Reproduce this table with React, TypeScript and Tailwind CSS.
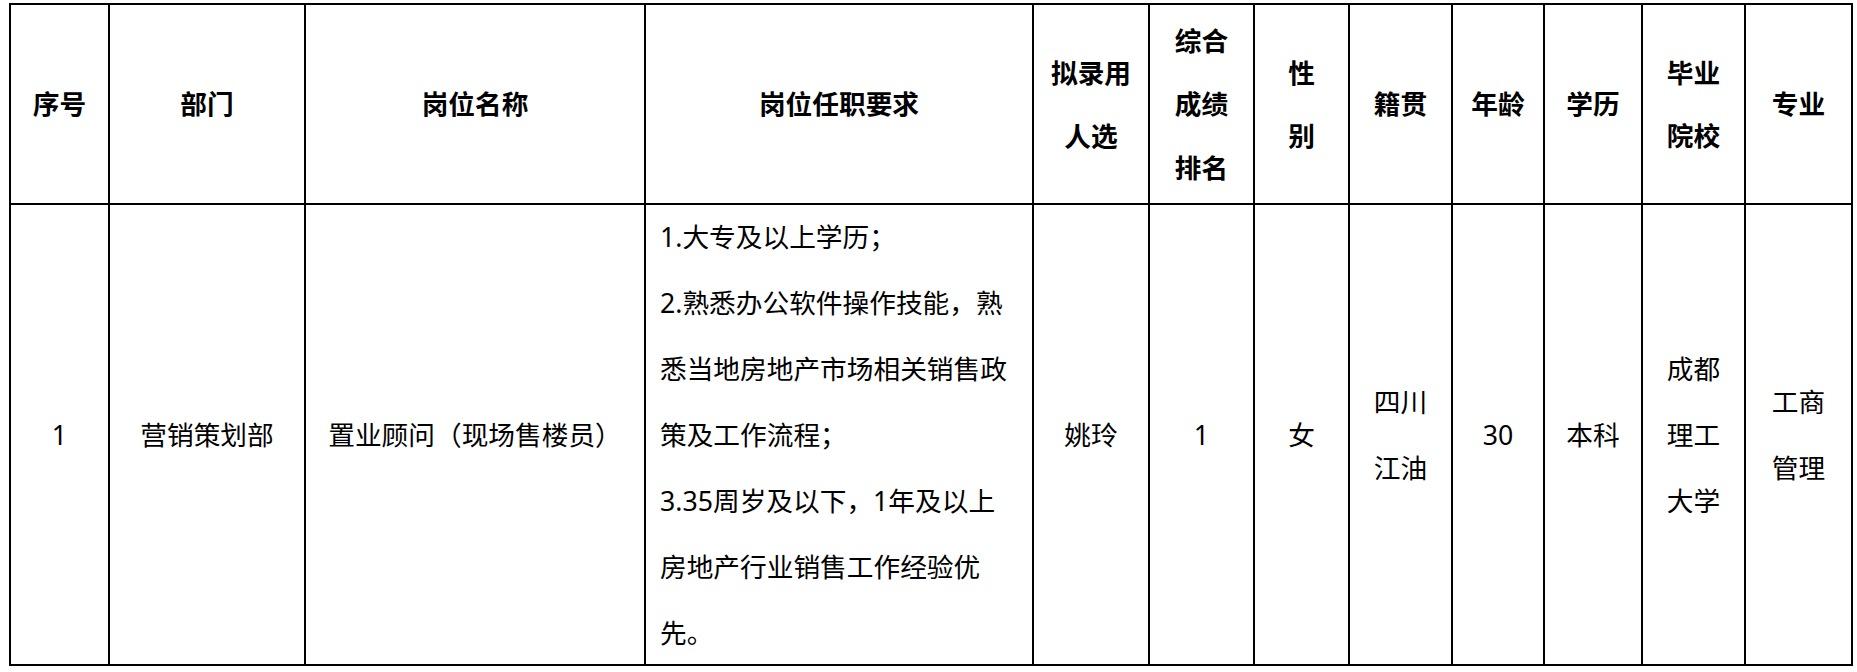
import React from 'react';

const cols = [
  { head: ['序号'], body: ['1'] },
  { head: ['部门'], body: ['营销策划部'] },
  { head: ['岗位名称'], body: ['置业顾问（现场售楼员）'] },
  { head: ['岗位任职要求'], body: [] },
  { head: ['拟录用', '人选'], body: ['姚玲'] },
  { head: ['综合', '成绩', '排名'], body: ['1'] },
  { head: ['性', '别'], body: ['女'] },
  { head: ['籍贯'], body: ['四川', '江油'] },
  { head: ['年龄'], body: ['30'] },
  { head: ['学历'], body: ['本科'] },
  { head: ['毕业', '院校'], body: ['成都', '理工', '大学'] },
  { head: ['专业'], body: ['工商', '管理'] },
];

// 岗位任职要求：按原表换行
const yaoqiu = [
  '1.大专及以上学历；',
  '2.熟悉办公软件操作技能，熟',
  '悉当地房地产市场相关销售政',
  '策及工作流程；',
  '3.35周岁及以下，1年及以上',
  '房地产行业销售工作经验优',
  '先。',
];

const cell = 'border-r-2 border-b-2 border-black flex flex-col justify-center';

export default function App() {
  return (
    <div
      className="min-h-screen bg-white pt-[3px] pl-[9px] text-black text-[26.7px]"
      style={{ fontFamily: '"Noto Sans", "Noto Sans CJK SC", sans-serif' }}
    >
      <div className="grid w-fit grid-cols-[99px_196px_340px_388px_116px_105px_95px_103px_92px_98px_103px_107px] grid-rows-[200px_461px] border-l-2 border-t-2 border-black">
        {cols.map((c, i) => (
          <div key={'h' + i} className={`${cell} items-center font-bold leading-[63.5px]`}>
            {c.head.map((t) => (
              <div key={t} className="whitespace-nowrap">{t}</div>
            ))}
          </div>
        ))}
        {cols.map((c, i) =>
          i === 3 ? (
            <div key={'b' + i} className={`${cell} items-start pl-[14px] leading-[66px]`}>
              {yaoqiu.map((t) => (
                <div key={t} className="whitespace-nowrap">{t}</div>
              ))}
            </div>
          ) : (
            <div key={'b' + i} className={`${cell} items-center leading-[66px]`}>
              {c.body.map((t) => (
                <div key={t} className="whitespace-nowrap">{t}</div>
              ))}
            </div>
          )
        )}
      </div>
    </div>
  );
}
